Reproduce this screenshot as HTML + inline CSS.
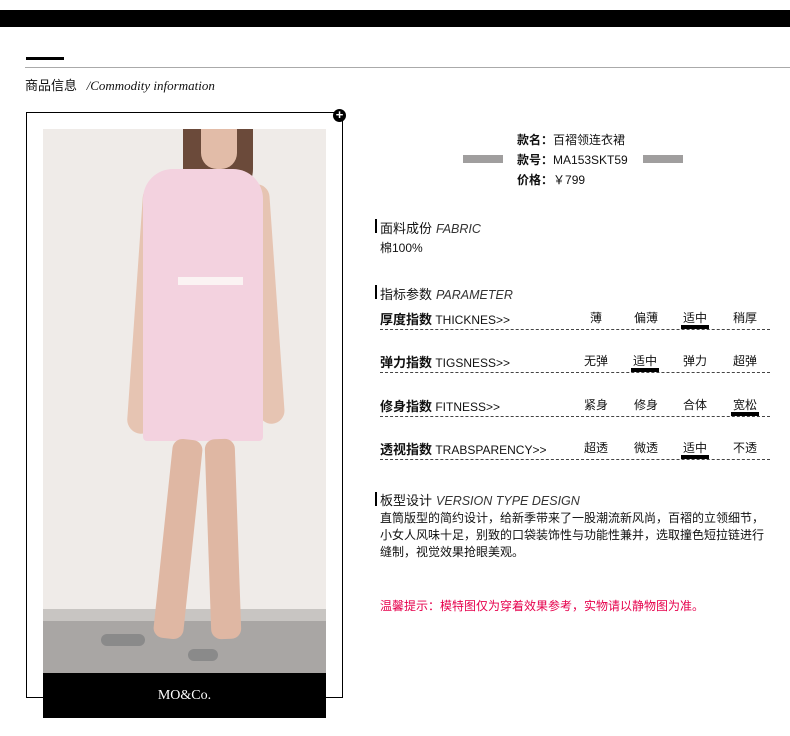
<!DOCTYPE html>
<html><head><meta charset="utf-8"><style>
*{margin:0;padding:0;box-sizing:border-box}
body{width:790px;height:736px;background:#fff;position:relative;overflow:hidden;font-family:"Liberation Sans","Noto Sans CJK SC",sans-serif;color:#111}
.a{position:absolute;white-space:nowrap}
.hd{font-size:13px}
.hd i{color:#333;font-size:12.5px;margin-left:4px}
.bar{position:absolute;width:2px;height:14px;background:#000}
.row{position:absolute;left:380px;width:390px;height:21px;border-bottom:1px dashed #444;font-size:12px}
.row b{font-weight:bold;font-size:13px}
.opt{position:absolute;top:0;width:28px;text-align:center;font-size:12px}
.sel:after{content:"";position:absolute;left:0;right:0;top:16px;height:4px;background:#000}
</style></head><body>
<div class="a" style="left:0;top:10px;width:790px;height:17px;background:#000"></div>
<div class="a" style="left:26px;top:57px;width:38px;height:3px;background:#000"></div>
<div class="a" style="left:25px;top:67px;width:765px;height:1px;background:#aaa"></div>
<div class="a" style="left:25px;top:75px;font-size:13px">商品信息 <span style="font-family:'Liberation Serif',serif;font-style:italic;margin-left:6px">/Commodity information</span></div>

<div class="a" style="left:26px;top:112px;width:317px;height:586px;border:1px solid #000"></div>
<div class="a" style="left:333px;top:109px;width:13px;height:13px;border-radius:50%;background:#000;color:#fff;font-size:13px;line-height:12px;text-align:center;font-weight:bold">+</div>
<div class="a" style="left:43px;top:129px;width:283px;height:545px;background:#efebe8;overflow:hidden">
  <div class="a" style="left:0;top:490px;width:283px;height:55px;background:#a9a6a4"></div>
  <div class="a" style="left:0;top:480px;width:283px;height:12px;background:#c8c5c2"></div>
  <div class="a" style="left:140px;top:0;width:70px;height:70px;background:#6b4a3a;border-radius:0 0 30px 30px"></div>
  <div class="a" style="left:158px;top:0;width:36px;height:40px;background:#e2bca8;border-radius:0 0 16px 16px"></div>
  <div class="a" style="left:92px;top:55px;width:28px;height:250px;background:#e6c4b2;border-radius:14px;transform:rotate(4deg)"></div>
  <div class="a" style="left:208px;top:55px;width:26px;height:240px;background:#e6c4b2;border-radius:14px;transform:rotate(-4deg)"></div>
  <div class="a" style="left:100px;top:40px;width:120px;height:272px;background:#f3d2df;border-radius:30px 30px 4px 4px"></div>
  <div class="a" style="left:135px;top:148px;width:65px;height:8px;background:#fbf3f3"></div>
  <div class="a" style="left:120px;top:310px;width:30px;height:200px;background:#dfb7a3;border-radius:10px;transform:rotate(6deg)"></div>
  <div class="a" style="left:165px;top:310px;width:30px;height:200px;background:#dfb7a3;border-radius:10px;transform:rotate(-2deg)"></div>
  <div class="a" style="left:58px;top:505px;width:44px;height:12px;background:#8a8a8a;border-radius:6px"></div>
  <div class="a" style="left:145px;top:520px;width:30px;height:12px;background:#8a8a8a;border-radius:6px"></div>
</div>
<div class="a" style="left:43px;top:673px;width:283px;height:45px;background:#000;color:#fff;font-family:'Liberation Serif',serif;font-size:14px;text-align:center;line-height:45px">MO&amp;Co.</div>

<div class="a" style="left:463px;top:155px;width:40px;height:8px;background:#a09e9e"></div>
<div class="a" style="left:643px;top:155px;width:40px;height:8px;background:#a09e9e"></div>
<div class="a" style="left:517px;top:130px;font-size:12px;line-height:20px"><b>款名：</b>百褶领连衣裙<br><b>款号：</b>MA153SKT59<br><b>价格：</b>￥799</div>

<div class="bar" style="left:375px;top:219px"></div>
<div class="a hd" style="left:380px;top:218px">面料成份<i>FABRIC</i></div>
<div class="a" style="left:380px;top:239px;font-size:12px">棉100%</div>

<div class="bar" style="left:375px;top:285px"></div>
<div class="a hd" style="left:380px;top:284px">指标参数<i>PARAMETER</i></div>

<div class="row" style="top:309px"><b>厚度指数</b> THICKNES&gt;&gt;
<span class="opt" style="left:202px">薄</span><span class="opt" style="left:252px">偏薄</span><span class="opt sel" style="left:301px">适中</span><span class="opt" style="left:351px">稍厚</span></div>
<div class="row" style="top:352px"><b>弹力指数</b> TIGSNESS&gt;&gt;
<span class="opt" style="left:202px">无弹</span><span class="opt sel" style="left:251px">适中</span><span class="opt" style="left:301px">弹力</span><span class="opt" style="left:351px">超弹</span></div>
<div class="row" style="top:396px"><b>修身指数</b> FITNESS&gt;&gt;
<span class="opt" style="left:202px">紧身</span><span class="opt" style="left:252px">修身</span><span class="opt" style="left:301px">合体</span><span class="opt sel" style="left:351px">宽松</span></div>
<div class="row" style="top:439px"><b>透视指数</b> TRABSPARENCY&gt;&gt;
<span class="opt" style="left:202px">超透</span><span class="opt" style="left:252px">微透</span><span class="opt sel" style="left:301px">适中</span><span class="opt" style="left:351px">不透</span></div>

<div class="bar" style="left:375px;top:492px"></div>
<div class="a hd" style="left:380px;top:490px">板型设计<i>VERSION TYPE DESIGN</i></div>
<div class="a" style="left:380px;top:510px;width:395px;white-space:normal;font-size:12px;line-height:17px">直筒版型的简约设计，给新季带来了一股潮流新风尚，百褶的立领细节，小女人风味十足，别致的口袋装饰性与功能性兼并，选取撞色短拉链进行缝制，视觉效果抢眼美观。</div>
<div class="a" style="left:380px;top:597px;font-size:12px;color:#e6004c">温馨提示：模特图仅为穿着效果参考，实物请以静物图为准。</div>
</body></html>
